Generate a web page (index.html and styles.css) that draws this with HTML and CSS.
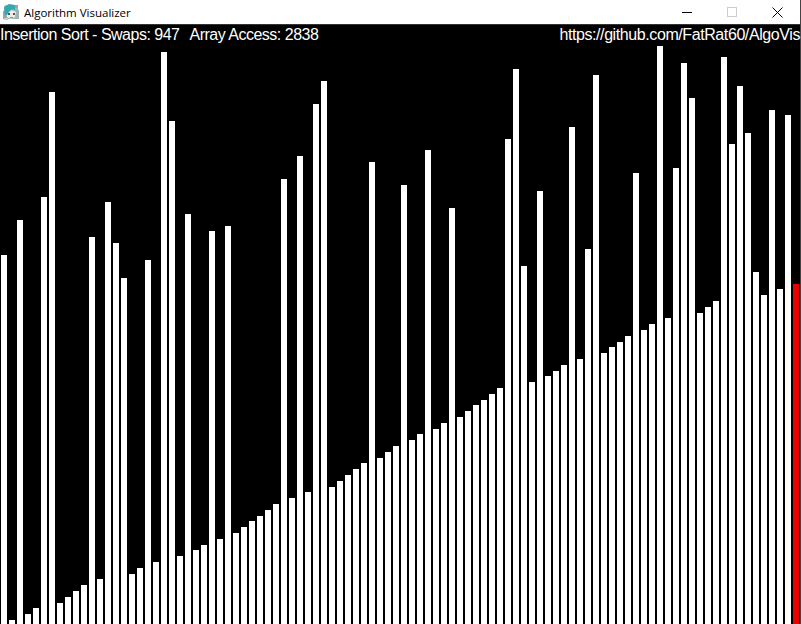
FILE: index.html
```html
<!DOCTYPE html>
<html lang="en">
<head>
<meta charset="UTF-8">
<title>Algorithm Visualizer</title>
<link rel="stylesheet" href="styles.css">
</head>
<body>
<div class="window">

  <!-- title bar -->
  <div class="titlebar">
    <svg class="app-icon" width="16" height="16" viewBox="0 0 16 16">
      <rect x="1" y="1" width="14" height="14" rx="3" fill="#7cc4c4"/>
      <rect x="0" y="7" width="3" height="8" fill="#8fa8a8"/>
      <rect x="13" y="6" width="3" height="9" fill="#9fb4b4"/>
      <path d="M4 7 Q9 5 13 8 L12 13 Q8 16 4 13 Z" fill="#fbe6da"/>
      <path d="M1 3 L6 0 L12 1 L12 6 L9 5 L6 8 L4 11 L2 11 Z" fill="#35a7ad"/>
      <rect x="5" y="9" width="2" height="2" fill="#3a5f70"/>
      <rect x="10" y="9" width="2" height="2" fill="#3a5f70"/>
      <rect x="7" y="13" width="3" height="1" fill="#d9706c"/>
      <rect x="12" y="1" width="3" height="3" fill="#c9909f"/>
      <rect x="1" y="14" width="4" height="2" fill="#d8c8c0"/>
    </svg>
    <span class="app-title">Algorithm Visualizer</span>
    <div class="controls">
      <div class="ctl"><svg width="10" height="10" viewBox="0 0 10 10"><path d="M0 5.5H10" stroke="#000"/></svg></div>
      <div class="ctl"><svg width="10" height="10" viewBox="0 0 10 10"><rect x="0.5" y="0.5" width="9" height="9" fill="none" stroke="#ccc"/></svg></div>
      <div class="ctl ctl-close"><svg width="11" height="11" viewBox="0 0 11 11"><path d="M0.5 0.5L10.5 10.5M10.5 0.5L0.5 10.5" stroke="#000"/></svg></div>
    </div>
  </div>

  <div class="canvas">
    <div class="stats">
      <div class="counters">
        <span>Insertion Sort - Swaps: 947</span>
        <span>Array Access: 2838</span>
      </div>
      <span>https://github.com/FatRat60/AlgoVis</span>
    </div>

    <!-- bars, heights are the array values at this step -->
    <div class="bars">
      <i class="bar" style="height:369px"></i><i class="bar" style="height:4px"></i><i class="bar" style="height:404px"></i><i class="bar" style="height:10px"></i><i class="bar" style="height:16px"></i>
      <i class="bar" style="height:427px"></i><i class="bar" style="height:532px"></i><i class="bar" style="height:21px"></i><i class="bar" style="height:27px"></i><i class="bar" style="height:33px"></i>
      <i class="bar" style="height:39px"></i><i class="bar" style="height:387px"></i><i class="bar" style="height:45px"></i><i class="bar" style="height:422px"></i><i class="bar" style="height:381px"></i>
      <i class="bar" style="height:346px"></i><i class="bar" style="height:50px"></i><i class="bar" style="height:56px"></i><i class="bar" style="height:364px"></i><i class="bar" style="height:62px"></i>
      <i class="bar" style="height:572px"></i><i class="bar" style="height:503px"></i><i class="bar" style="height:68px"></i><i class="bar" style="height:410px"></i><i class="bar" style="height:74px"></i>
      <i class="bar" style="height:79px"></i><i class="bar" style="height:393px"></i><i class="bar" style="height:85px"></i><i class="bar" style="height:398px"></i><i class="bar" style="height:91px"></i>
      <i class="bar" style="height:97px"></i><i class="bar" style="height:103px"></i><i class="bar" style="height:108px"></i><i class="bar" style="height:114px"></i><i class="bar" style="height:120px"></i>
      <i class="bar" style="height:445px"></i><i class="bar" style="height:126px"></i><i class="bar" style="height:468px"></i><i class="bar" style="height:132px"></i><i class="bar" style="height:520px"></i>
      <i class="bar" style="height:543px"></i><i class="bar" style="height:137px"></i><i class="bar" style="height:143px"></i><i class="bar" style="height:149px"></i><i class="bar" style="height:155px"></i>
      <i class="bar" style="height:161px"></i><i class="bar" style="height:462px"></i><i class="bar" style="height:166px"></i><i class="bar" style="height:172px"></i><i class="bar" style="height:178px"></i>
      <i class="bar" style="height:439px"></i><i class="bar" style="height:184px"></i><i class="bar" style="height:190px"></i><i class="bar" style="height:474px"></i><i class="bar" style="height:195px"></i>
      <i class="bar" style="height:201px"></i><i class="bar" style="height:416px"></i><i class="bar" style="height:207px"></i><i class="bar" style="height:213px"></i><i class="bar" style="height:219px"></i>
      <i class="bar" style="height:224px"></i><i class="bar" style="height:230px"></i><i class="bar" style="height:236px"></i><i class="bar" style="height:485px"></i><i class="bar" style="height:555px"></i>
      <i class="bar" style="height:358px"></i><i class="bar" style="height:242px"></i><i class="bar" style="height:433px"></i><i class="bar" style="height:248px"></i><i class="bar" style="height:253px"></i>
      <i class="bar" style="height:259px"></i><i class="bar" style="height:497px"></i><i class="bar" style="height:265px"></i><i class="bar" style="height:375px"></i><i class="bar" style="height:549px"></i>
      <i class="bar" style="height:271px"></i><i class="bar" style="height:277px"></i><i class="bar" style="height:282px"></i><i class="bar" style="height:288px"></i><i class="bar" style="height:451px"></i>
      <i class="bar" style="height:294px"></i><i class="bar" style="height:300px"></i><i class="bar" style="height:578px"></i><i class="bar" style="height:306px"></i><i class="bar" style="height:456px"></i>
      <i class="bar" style="height:561px"></i><i class="bar" style="height:526px"></i><i class="bar" style="height:311px"></i><i class="bar" style="height:317px"></i><i class="bar" style="height:323px"></i>
      <i class="bar" style="height:567px"></i><i class="bar" style="height:480px"></i><i class="bar" style="height:538px"></i><i class="bar" style="height:491px"></i><i class="bar" style="height:352px"></i>
      <i class="bar" style="height:329px"></i><i class="bar" style="height:514px"></i><i class="bar" style="height:335px"></i><i class="bar" style="height:509px"></i><i class="bar active" style="height:340px"></i>
    </div>
  </div>
</div>
</body>
</html>
```

FILE: styles.css
```css
html, body {
  margin: 0;
  height: 100%;
  overflow: hidden;
}
.window {
  display: flex;
  flex-direction: column;
  height: 624px;
  background-color: #000;
  border-right: 1px solid #444;
}
.titlebar {
  display: flex;
  align-items: center;
  height: 24px;
  flex: none;
  padding-left: 3px;
  background-color: #fff;
  border-bottom: 1px solid #333;
}
.app-icon {
  margin-right: 5px;
}
.app-title {
  font-family: "Open Sans", sans-serif;
  font-size: 11.5px;
  color: #000;
}
.controls {
  display: flex;
  margin-left: auto;
}
.ctl {
  display: flex;
  align-items: center;
  justify-content: center;
  width: 45px;
  height: 24px;
}
.ctl-close {
  width: 46px;
}
.canvas {
  display: flex;
  flex-direction: column;
  flex: 1;
}
.stats {
  display: flex;
  justify-content: space-between;
  height: 21px;
  flex: none;
  font-family: "Liberation Sans", Arial, sans-serif;
  font-size: 16px;
  letter-spacing: -0.41px;
  line-height: 20px;
  color: #fff;
}
.counters {
  display: flex;
  gap: 10px;
  letter-spacing: -0.5px;
}
.bars {
  display: flex;
  align-items: flex-end;
  flex: 1;
  gap: 2px;
  padding-left: 1px;
}
.bar {
  display: block;
  width: 6px;
  flex: none;
  background-color: #fff;
}
.bar.active {
  background-color: #e60000;
}
```
